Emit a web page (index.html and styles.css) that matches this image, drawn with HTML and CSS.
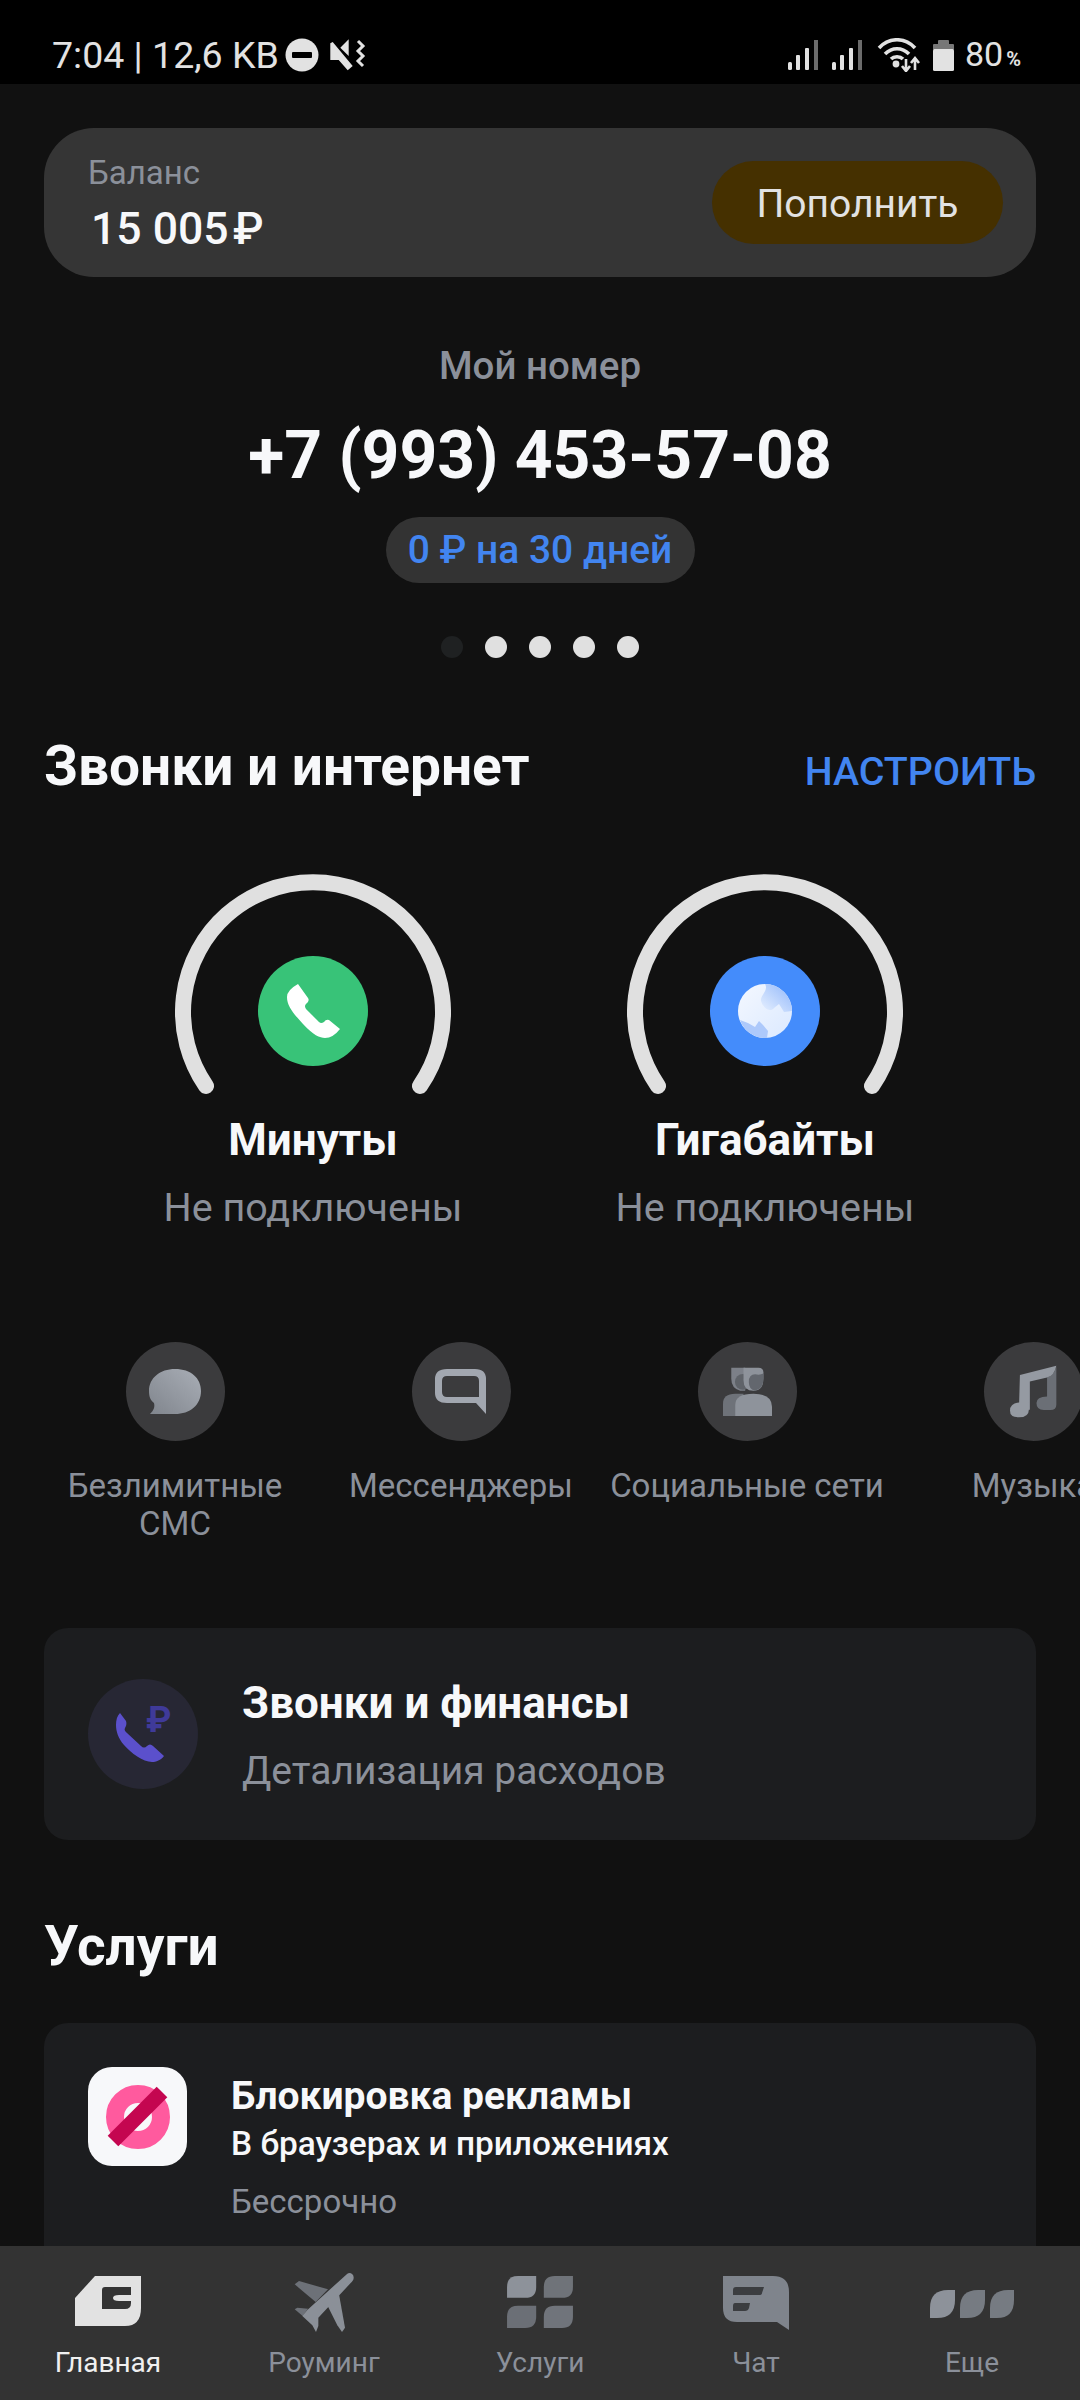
FILE: index.html
```html
<!DOCTYPE html>
<html lang="ru">
<head>
<meta charset="utf-8">
<title>Главная</title>
<link rel="stylesheet" href="styles.css">
</head>
<body>
<div class="screen">
  <header class="status">
    <div class="status-left">
      <span class="status-text">7:04 | 12,6 KB</span>
      <svg class="ic-dnd" width="34" height="34" viewBox="0 0 34 34"><circle cx="17" cy="17" r="16.5" fill="#e2e2e2"/><rect x="7" y="14" width="20" height="6" rx="1" fill="#000"/></svg>
      <svg class="ic-mute" width="36" height="32" viewBox="0 -1 36 32"><path d="M10.3 7.7L18.7 -.7V16Z" fill="#e2e2e2"/><path d="M.3 3.3L2.7 2L22.7 26L17.7 30.3L8.7 20H.3Z" fill="#e2e2e2"/><path d="M28 1L33 6L28 11L33 16L28 21L33 26" fill="none" stroke="#e2e2e2" stroke-width="3"/></svg>
    </div>
    <div class="status-right">
      <svg class="ic-signal" width="30" height="30" viewBox="0 0 30 30"><rect x="0" y="22" width="4" height="8" rx="1.5" fill="#e2e2e2"/><rect x="8" y="15" width="4" height="15" rx="1" fill="#e2e2e2"/><rect x="17" y="8" width="4" height="22" rx="1" fill="#e2e2e2"/><rect x="26" y="0" width="4" height="30" fill="#6b6b6b"/></svg>
      <svg class="ic-signal" width="30" height="30" viewBox="0 0 30 30"><rect x="0" y="22" width="4" height="8" rx="1.5" fill="#e2e2e2"/><rect x="8" y="15" width="4" height="15" rx="1" fill="#e2e2e2"/><rect x="17" y="8" width="4" height="22" rx="1" fill="#e2e2e2"/><rect x="26" y="0" width="4" height="30" fill="#6b6b6b"/></svg>
      <svg class="ic-wifi" width="44" height="34" viewBox="0 0 44 34"><path d="M2 10C12 -1 28 -1 38 10M8 16C15 9 25 9 32 16M14 21C17 18 23 18 26 21" fill="none" stroke="#e2e2e2" stroke-width="3.6"/><circle cx="19" cy="26" r="3.4" fill="#e2e2e2"/><path d="M29 21V32M25 28L29 33L33 28M38 32V21M34 25L38 20L42 25" fill="none" stroke="#e2e2e2" stroke-width="2.6"/></svg>
      <svg class="ic-batt" width="21" height="31" viewBox="0 0 21 31"><rect x="5" y="0" width="11" height="5" rx="1" fill="#777"/><rect x="0" y="4" width="21" height="6" rx="1" fill="#777"/><rect x="0" y="9" width="21" height="22" rx="1.5" fill="#e2e2e2"/></svg>
      <span class="batt-text">80<small class="pct">%</small></span>
    </div>
  </header>

  <main class="content">
    <section class="balance">
      <div class="balance-info">
        <div class="balance-label">Баланс</div>
        <div class="balance-sum">15 005&#8202;₽</div>
      </div>
      <button class="topup">Пополнить</button>
    </section>

    <section class="number">
      <div class="number-label">Мой номер</div>
      <div class="number-value">+7 (993) 453-57-08</div>
      <div class="tariff">0 ₽ на 30 дней</div>
      <div class="dots">
        <span class="dot dot-off"></span><span class="dot"></span><span class="dot"></span><span class="dot"></span><span class="dot"></span>
      </div>
    </section>

    <section class="head-row">
      <h2 class="h2">Звонки и интернет</h2>
      <span class="link">НАСТРОИТЬ</span>
    </section>

    <section class="gauges">
      <div class="gauge">
        <div class="dial">
          <svg width="276" height="226" viewBox="0 0 276 226"><path d="M31 213A130 130 0 1 1 245 213" fill="none" stroke="#e0e0e0" stroke-width="16" stroke-linecap="round"/><circle cx="138" cy="138" r="55" fill="#38c378"/><g transform="translate(138 138)"><path d="M-15 -27L-5 -13Q-3 -10 -7 -7Q-9 -5 -7 -2L6 11Q8 13 11 11Q13 8 16 9L27 18Q20 27 12 27C7 27 0 24 -10 13C-20 2 -26 -5 -26 -14Q-26 -21 -15 -27Z" fill="#fff"/></g></svg>
        </div>
        <div class="gauge-title">Минуты</div>
        <div class="gauge-sub">Не подключены</div>
      </div>
      <div class="gauge">
        <div class="dial">
          <svg width="276" height="226" viewBox="0 0 276 226"><defs><linearGradient id="gl" x1="0" y1="0" x2="1" y2="1"><stop offset="0" stop-color="#f4f8ff"/><stop offset="1" stop-color="#dbe9ff"/></linearGradient><linearGradient id="gs" x1="0" y1="1" x2="1" y2="0"><stop offset="0" stop-color="#e8f1ff"/><stop offset="1" stop-color="#8fb6fa"/></linearGradient></defs><path d="M31 213A130 130 0 1 1 245 213" fill="none" stroke="#e0e0e0" stroke-width="16" stroke-linecap="round"/><circle cx="138" cy="138" r="55" fill="#448cfb"/><g transform="translate(138 138)"><circle r="27" fill="url(#gl)"/><path d="M0 -27C4 -20 -5 -16 -4 -10C-2 -3 5 2 9 -3L14 -7L19 1L27 0A27 27 0 0 0 0 -27Z" fill="url(#gs)"/><path d="M-25 9L-17 12L-10 16L-6 10L-2 14L3 20L2 27A27 27 0 0 1 -25 9Z" fill="#adc9fb"/></g></svg>
        </div>
        <div class="gauge-title">Гигабайты</div>
        <div class="gauge-sub">Не подключены</div>
      </div>
    </section>

    <section class="chips">
      <div class="chip">
        <div class="chip-ic"><svg width="54" height="48" viewBox="0 0 54 48"><defs><linearGradient id="sm" x1="1" y1="0" x2="0" y2="1"><stop offset="0" stop-color="#a9aeb6"/><stop offset="1" stop-color="#80858d"/></linearGradient></defs><path d="M27 1C43 1 53 10 53 23C53 37 42 46 27 46H2C6 42 7 39 6 35C2 32 1 28 1 23C1 10 12 1 27 1Z" fill="url(#sm)"/></svg></div>
        <div class="chip-label">Безлимитные СМС</div>
      </div>
      <div class="chip">
        <div class="chip-ic"><svg width="52" height="46" viewBox="0 0 52 46"><path d="M12 0H40Q51 0 51 10V45L41 34H12Q0 34 0 24V10Q0 0 12 0ZM12 7Q7 7 7 12V23Q7 28 12 28H44V12Q44 7 39 7Z" fill="#a2a7b0" fill-rule="evenodd"/></svg></div>
        <div class="chip-label">Мессенджеры</div>
      </div>
      <div class="chip">
        <div class="chip-ic"><svg width="49" height="49" viewBox="68 50 148 148"><path d="M93 52H135V122H120Q93 115 93 85Z" fill="#7c8088"/><circle cx="128" cy="95" r="24" fill="#5f6369"/><path d="M130 52H175Q190 52 190 66V85Q190 122 160 122Q130 122 130 90Z" fill="#8e939b"/><path d="M190 70Q180 75 165 72Q146 72 146 95Q146 118 165 121Q190 118 190 85Z" fill="#63676e"/><path d="M68 198V160Q68 132 105 131H130V198Z" fill="#6e7279"/><path d="M105 198V165Q105 131 160 131Q216 131 216 170V198Z" fill="#8e939b"/></svg></div>
        <div class="chip-label">Социальные сети</div>
      </div>
      <div class="chip">
        <div class="chip-ic"><svg width="48" height="53" viewBox="925 40 145 160"><path d="M1040 78Q1060 72 1068 45V160Q1068 176 1050 176H1030Q1008 176 1008 155Q1008 135 1040 135Z" fill="#6b6f76"/><path d="M958 70L1068 42Q1062 72 1040 78L988 90V175H955Z" fill="#959aa2"/><path d="M928 178Q928 156 955 153H985V175Q985 198 955 198Q928 198 928 178Z" fill="#959aa2"/></svg></div>
        <div class="chip-label">Музыка</div>
      </div>
    </section>

    <section class="card card-fin">
      <div class="fin-ic"><svg width="110" height="110" viewBox="0 0 110 110"><path d="M32 34L38 42C39 45 38 47 37 49C36 51 37 52 39 54L53 67C55 69 57 69 59 67C61 65 63 65 65 67L76 77C73 81 68 83 64 83C55 83 43 74 36 66C30 59 28 52 28 46C28 41 29 37 32 34Z" fill="#5b50cc"/><text class="fin-rub" x="58" y="53">₽</text></svg></div>
      <div class="fin-text">
        <div class="fin-title">Звонки и финансы</div>
        <div class="fin-sub">Детализация расходов</div>
      </div>
    </section>

    <h2 class="h2 h2-serv">Услуги</h2>

    <section class="card card-serv">
      <div class="ad-ic"><svg width="66" height="66" viewBox="0 0 66 66"><circle cx="33" cy="33" r="23" fill="none" stroke="#ff5a9e" stroke-width="18"/><path d="M8 57L57 8" stroke="#c40650" stroke-width="15"/></svg></div>
      <div class="serv-text">
        <div class="serv-title">Блокировка рекламы</div>
        <div class="serv-sub">В браузерах и приложениях</div>
        <div class="serv-term">Бессрочно</div>
      </div>
    </section>
  </main>

  <nav class="nav">
    <div class="nav-item nav-active">
      <div class="nav-ic"><svg width="66" height="50" viewBox="0 0 66 50"><path d="M20 0H66V32Q66 50 50 50H0V22Z" fill="#e2e2e2"/><path d="M30 11H56V19H44Q38 19 38 22Q38 25 44 25H56V27Q56 33 50 33H27V14Q27 11 30 11Z" fill="#333"/></svg></div>
      <span>Главная</span>
    </div>
    <div class="nav-item">
      <div class="nav-ic nav-ic-plane"><svg width="60" height="60" viewBox="40 18 180 180"><path d="M42 55L55 45L142 70L105 108Z" fill="#6d7178"/><path d="M42 130L50 125L82 128L66 150Z" fill="#6d7178"/><path d="M140 118L175 85L193 185L184 198L170 178Z" fill="#8b9098"/><path d="M200 23C208 18 220 24 219 36C219 42 214 47 210 51L113 155L113 180L106 198L95 178L65 150L80 132Z" fill="#8b9098"/></svg></div>
      <span>Роуминг</span>
    </div>
    <div class="nav-item">
      <div class="nav-ic"><svg width="66" height="52" viewBox="681 33 199 157"><path d="M681 66Q681 33 714 33H769V66Q769 99 736 99H681Z" fill="#8d929a"/><path d="M792 66Q792 33 825 33H880V66Q880 99 847 99H792Z" fill="#6f7379"/><path d="M681 156Q681 123 714 123H769V156Q769 190 736 190H681Z" fill="#6b6f76"/><path d="M792 156Q792 123 825 123H880V156Q880 190 847 190H792Z" fill="#70747b"/></svg></div>
      <span>Услуги</span>
    </div>
    <div class="nav-item">
      <div class="nav-ic"><svg width="66" height="54" viewBox="0 0 66 54"><path d="M0 0H50Q66 0 66 16V54L54 46H14Q0 46 0 32Z" fill="#7f848c"/><path d="M13 11H41L39 17Q39 19 36 19H10V14Q10 11 13 11Z" fill="#3b3d40"/><path d="M12 27H27L26 32Q25 35 22 35H10V30Q10 27 12 27Z" fill="#3b3d40"/></svg></div>
      <span>Чат</span>
    </div>
    <div class="nav-item">
      <div class="nav-ic nav-ic-more"><svg width="84" height="28" viewBox="0 0 84 28"><path d="M0 28V18Q0 0 18 0H25V10Q25 28 7 28Z" fill="#8d929a"/><path d="M30 28V18Q30 0 48 0H55V10Q55 28 37 28Z" fill="#767b82"/><path d="M60 28V18Q60 0 78 0H84V10Q84 28 67 28Z" fill="#767b82"/></svg></div>
      <span>Еще</span>
    </div>
  </nav>
</div>
</body>
</html>
```

FILE: styles.css
```css
* { box-sizing: border-box; }
html, body { margin: 0; padding: 0; background: #111; }
body { font-family: Roboto, "Noto Sans", sans-serif; color: #f7f8fa; }
.screen { width: 1080px; height: 2400px; display: flex; flex-direction: column; overflow: hidden; background: #111; }

.status { flex: none; height: 84px; background: #000; color: #e2e2e2; display: flex; justify-content: space-between; align-items: center; padding: 26px 59px 0 52px; }
.status-left, .status-right { display: flex; align-items: center; }
.status-text { font-size: 37.5px; line-height: 40px; white-space: nowrap; }
.batt-text { font-size: 34px; line-height: 40px; white-space: nowrap; padding-top: 3px; }
.ic-dnd { margin-left: 6px; }
.ic-mute { margin-left: 11px; }
.ic-signal { margin-right: 14px; }
.ic-wifi { margin: 0 12px 0 1px; }
.ic-batt { margin-right: 11px; }
.pct { font-size: 20px; font-weight: 700; margin-left: 3px; }

.content { flex: 1; min-height: 0; overflow: hidden; padding-top: 44px; }

.balance { margin: 0 44px; height: 149px; border-radius: 50px; background: #353535; display: flex; align-items: center; justify-content: space-between; padding: 0 33px 0 44px; }
.balance-info { padding-top: 3px; }
.balance-label { font-size: 33px; line-height: 36px; color: #8b909a; }
.balance-sum { font-size: 44.5px; line-height: 50px; font-weight: 500; margin: 13px 0 0 3px; color: #f7f8fa; }
.topup { border: 0; width: 291px; height: 83px; border-radius: 42px; background: #453000; color: #e2e2e2; font: 400 39px/44px Roboto, sans-serif; padding: 2px 0 0; }

.number { display: flex; flex-direction: column; align-items: center; margin-top: 67px; }
.number-label { font-size: 38.5px; line-height: 44px; font-weight: 500; color: #8b909a; }
.number-value { font-size: 66px; line-height: 76px; font-weight: 700; margin-top: 30px; }
.tariff { margin-top: 23px; height: 66px; width: 309px; border-radius: 33px; background: #333; color: #4285f0; font-size: 39px; line-height: 66px; font-weight: 500; text-align: center; }
.dots { display: flex; gap: 22px; margin-top: 53px; }
.dot { width: 22px; height: 22px; border-radius: 50%; background: #e0e0e0; }
.dot-off { background: #1f2122; }

.head-row { margin: 78px 44px 0; display: flex; justify-content: space-between; align-items: center; height: 60px; }
.h2 { margin: 0; font-size: 55px; line-height: 60px; font-weight: 700; }
.link { font-size: 39.3px; line-height: 44px; font-weight: 500; color: #4285f0; margin-top: 11px; }

.gauges { display: grid; grid-template-columns: 452px 452px; margin: 77px 0 0 200px; }
.gauge { width: 452px; margin-left: -113px; display: flex; flex-direction: column; align-items: center; }
.dial { height: 226px; }
.dial svg { display: block; }
.gauge-title { font-size: 44px; line-height: 50px; font-weight: 700; margin-top: 16px; }
.gauge-sub { font-size: 39.5px; line-height: 44px; color: #8b909a; margin-top: 21px; }

.chips { display: flex; margin: 112px 0 0 32px; width: 1230px; }
.chip { flex: none; width: 286px; display: flex; flex-direction: column; align-items: center; text-align: center; }
.chip-ic { width: 99px; height: 99px; border-radius: 50%; background: #3b3b3d; display: flex; align-items: center; justify-content: center; }
.chip-label { font-size: 33px; line-height: 38px; color: #8b909a; margin-top: 26px; }

.card { margin: 0 44px; background: #1c1d1f; border-radius: 24px; }
.card-fin { margin-top: 85px; height: 212px; display: flex; align-items: center; padding-left: 44px; }
.fin-ic { width: 110px; height: 110px; border-radius: 50%; background: #272734; flex: none; }
.fin-ic svg { display: block; }
.fin-rub { font: 700 36px Roboto, sans-serif; fill: #3f3a99; }
.fin-text { margin-left: 44px; padding-top: 2px; }
.fin-title { font-size: 44px; line-height: 50px; font-weight: 700; }
.fin-sub { font-size: 39px; line-height: 44px; color: #8b909a; margin-top: 21px; }

.h2-serv { margin: 76px 0 0 44px; }
.card-serv { margin-top: 47px; height: 260px; display: flex; align-items: flex-start; padding: 44px 0 0 44px; }
.ad-ic { width: 99px; height: 99px; border-radius: 24px; background: #f7f8fa; display: flex; align-items: center; justify-content: center; flex: none; }
.serv-text { margin-left: 44px; }
.serv-title { font-size: 39px; line-height: 44px; font-weight: 700; margin-top: 7px; }
.serv-sub { font-size: 33.4px; line-height: 38px; font-weight: 500; margin-top: 7px; }
.serv-term { font-size: 33px; line-height: 36px; color: #8b909a; margin-top: 21px; }

.nav { flex: none; height: 154px; background: #333; display: grid; grid-template-columns: repeat(5, 216px); }
.nav-item { display: flex; flex-direction: column; align-items: center; font-size: 28px; line-height: 34px; color: #8b909a; }
.nav-active { color: #f0f0f0; }
.nav-ic { height: 60px; margin-top: 30px; display: flex; align-items: flex-start; }
.nav-ic svg { display: block; }
.nav-ic-plane { margin-top: 26px; height: 64px; }
.nav-ic-more { padding-top: 14px; }
.nav-item span { margin-top: 10px; }
```
